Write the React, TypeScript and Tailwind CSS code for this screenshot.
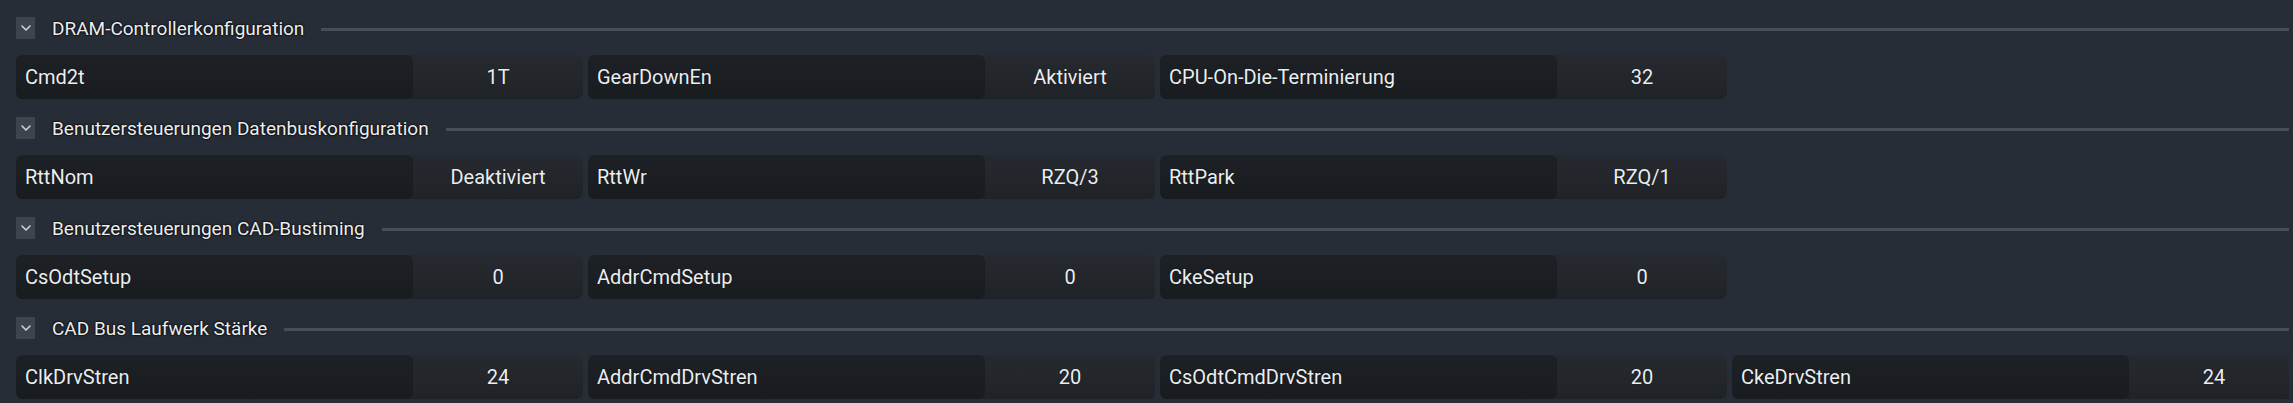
import React from "react";

type Item = { label: string; value: string };
type Section = { title: string; items: Item[] };

const sections: Section[] = [
  {
    title: "DRAM-Controllerkonfiguration",
    items: [
      { label: "Cmd2t", value: "1T" },
      { label: "GearDownEn", value: "Aktiviert" },
      { label: "CPU-On-Die-Terminierung", value: "32" },
    ],
  },
  {
    title: "Benutzersteuerungen Datenbuskonfiguration",
    items: [
      { label: "RttNom", value: "Deaktiviert" },
      { label: "RttWr", value: "RZQ/3" },
      { label: "RttPark", value: "RZQ/1" },
    ],
  },
  {
    title: "Benutzersteuerungen CAD-Bustiming",
    items: [
      { label: "CsOdtSetup", value: "0" },
      { label: "AddrCmdSetup", value: "0" },
      { label: "CkeSetup", value: "0" },
    ],
  },
  {
    title: "CAD Bus Laufwerk Stärke",
    items: [
      { label: "ClkDrvStren", value: "24" },
      { label: "AddrCmdDrvStren", value: "20" },
      { label: "CsOdtCmdDrvStren", value: "20" },
      { label: "CkeDrvStren", value: "24" },
    ],
  },
];

function Chevron() {
  return (
    <div className="w-[19px] h-[22px] shrink-0 bg-[#3e444c] flex items-center justify-center">
      <svg width="10" height="6" viewBox="0 0 10 6" fill="none">
        <polyline points="1,1 5,5 9,1" stroke="#d0d4d8" strokeWidth="1.6" strokeLinecap="round" strokeLinejoin="round" />
      </svg>
    </div>
  );
}

function Card({ item }: { item: Item }) {
  return (
    <div className="w-[567px] h-[44px] shrink-0 flex rounded-[6px] overflow-hidden bg-gradient-to-b from-[#262a30] via-[#23272c] to-[#1f2327]">
      <div className="w-[397px] h-full shrink-0 rounded-[6px] bg-gradient-to-b from-[#1d2024] via-[#1b1e22] to-[#191c1f] flex items-center pl-[9px] text-[20px] text-[#eceef0] [text-shadow:0_0_1px_rgba(0,0,0,0.8)]">
        {item.label}
      </div>
      <div className="flex-1 h-full flex items-center justify-center text-[20px] text-[#eceef0] [text-shadow:0_0_1px_rgba(0,0,0,0.8)]">
        {item.value}
      </div>
    </div>
  );
}

export default function App() {
  return (
    <div className="w-[2293px] h-[403px] overflow-hidden bg-[#272d36] font-['Roboto',sans-serif] leading-none">
      <div className="w-[2289px] overflow-hidden pl-[16px]">
        {sections.map((s) => (
          <div key={s.title} className="pt-[17px] pb-[1px]">
            <div className="flex items-center h-[22px]">
              <Chevron />
              <span className="ml-[17px] text-[19px] text-[#eceef0] whitespace-nowrap [text-shadow:0_0_2px_#000,0_0_2px_#000]">
                {s.title}
              </span>
              <div className="ml-[17px] mt-[3px] flex-1 h-[3px] bg-[#484e56]" />
            </div>
            <div className="mt-[16px] flex gap-[5px]">
              {s.items.map((it) => (
                <Card key={it.label} item={it} />
              ))}
            </div>
          </div>
        ))}
      </div>
    </div>
  );
}
